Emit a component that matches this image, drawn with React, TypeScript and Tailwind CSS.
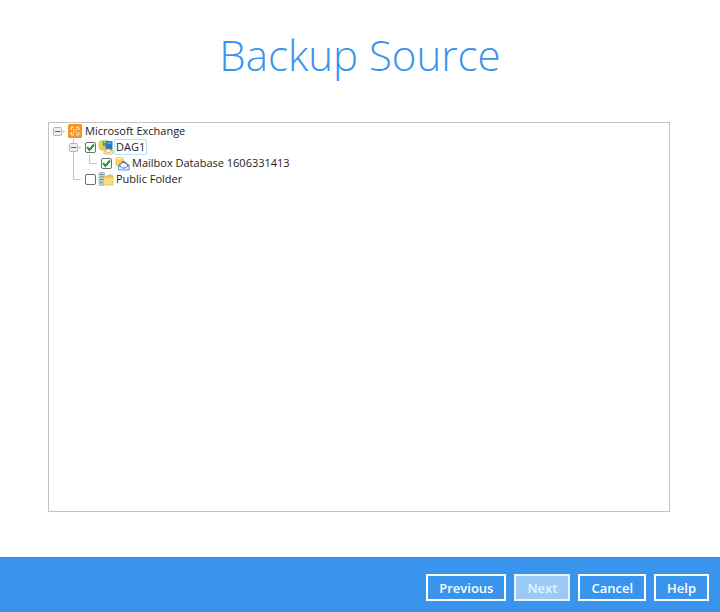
import React, { useState } from "react";
import clsx from "clsx";

/* ---------- Data ---------- */
type Guide = "blank" | "root" | "branch" | "line" | "last";
type IconName = "exchange" | "dag" | "mailbox" | "folder";
type Row = { id: string; label: string; icon: IconName; guides: Guide[]; checkbox: boolean; selected?: boolean };

const ROWS: Row[] = [
  { id: "exchange", label: "Microsoft Exchange", icon: "exchange", guides: ["root"], checkbox: false },
  { id: "dag1", label: "DAG1", icon: "dag", guides: ["blank", "branch"], checkbox: true, selected: true },
  { id: "mailbox", label: "Mailbox Database 1606331413", icon: "mailbox", guides: ["blank", "line", "last"], checkbox: true },
  { id: "public", label: "Public Folder", icon: "folder", guides: ["blank", "last"], checkbox: true },
];

const BUTTONS = [
  { label: "Previous", disabled: false },
  { label: "Next", disabled: true },
  { label: "Cancel", disabled: false },
  { label: "Help", disabled: false },
];

/* ---------- Tree guides ---------- */
const GUIDE_PATHS: Record<Guide, string> = {
  blank: "",
  root: "M12 8.5H16",
  branch: "M8.5 0V4M8.5 13V16M13 8.5H16",
  line: "M8.5 0V16",
  last: "M8.5 0V8.5H16",
};

const GuideCell = ({ kind, label }: { kind: Guide; label: string }) => {
  const expander = kind === "root" || kind === "branch";
  const art = (
    <svg viewBox="0 0 16 16" className="block size-4" fill="none" aria-hidden="true">
      <path d={GUIDE_PATHS[kind]} stroke="#c4c4c4" />
      {expander && (
        <>
          <rect x="4.5" y="4.5" width="8" height="8" rx="1" fill="#efefef" stroke="#b4b4b4" />
          <path d="M6 8.5H11" stroke="#5c5c5c" />
        </>
      )}
    </svg>
  );
  return expander ? (
    <button type="button" aria-label={`Collapse ${label}`} className="shrink-0">{art}</button>
  ) : (
    <span className="shrink-0">{art}</span>
  );
};

/* ---------- Icons ---------- */
const NodeIcon = ({ name }: { name: IconName }) => (
  <svg viewBox="0 0 16 16" className="size-4 shrink-0" fill="none" aria-hidden="true">
    {name === "exchange" && (
      <>
        <rect x="1" y="1" width="14" height="14" rx="1.5" fill="#f7941e" />
        <path d="M7 4.2H5.2Q4.2 4.2 4.2 5.2V7M9 4.2h1.8q1 0 1 1V7M4.2 9v1.8q0 1 1 1H7M11.8 9v1.8q0 1-1 1H9" stroke="#ffe6c2" strokeWidth="1.3" />
        <path d="M6 6 7.3 7.3M10 6 8.7 7.3M6 10 7.3 8.7M10 10 8.7 8.7" stroke="#ffe2b8" strokeWidth="1.2" />
      </>
    )}
    {name === "dag" && (
      <>
        <path d="M1 3Q3.5 1 6 2V10.5Q3 11.5 1 9.5Z" fill="#fbd45c" stroke="#e2ae45" strokeWidth="0.7" />
        <rect x="4.5" y="1.5" width="6" height="8.5" rx="1" fill="#4fae52" />
        <path d="M5.5 3H9" stroke="#b8e4ac" />
        <rect x="8" y="2" width="6.5" height="9" rx="1.2" fill="#2a72c4" />
        <path d="M9.3 4H13.2" stroke="#8cc6f2" />
        <rect x="3" y="7" width="4.5" height="4.5" fill="#f6c441" />
        <path d="M6 12 10.3 9.8 14.8 11.8V15H6Z" fill="#fff3c4" stroke="#c9ac62" strokeWidth="0.8" />
        <path d="m6.3 12.2 4.1 1.7 4.1-1.7" stroke="#d8b866" strokeWidth="0.8" />
      </>
    )}
    {name === "mailbox" && (
      <>
        <path d="M2 3.2Q5.5 0.8 9 3.2V10Q5.5 12.5 2 10Z" fill="#fbd25c" stroke="#edb94b" strokeWidth="0.7" />
        <ellipse cx="5.5" cy="3.5" rx="2.8" ry="1" fill="#fff0b0" />
        <path d="M4.5 10 9.5 5.5 15.2 10V15H4.5Z" fill="#3f76bd" />
        <path d="M8.3 7.2 9.7 6 12 8Z" fill="#d64d3d" />
        <path d="M6.5 9.2 9 7.8 13 9.2V12.5H6.5Z" fill="#f4f8fe" />
        <path d="M4.5 10.5 9.8 13.5 15.2 10.5V15H4.5Z" fill="#dceafa" stroke="#5d8cc8" strokeWidth="0.8" />
      </>
    )}
    {name === "folder" && (
      <>
        <rect x="1" y="1.5" width="5.5" height="13" rx="0.5" fill="#c4d7df" stroke="#8faab5" strokeWidth="0.6" />
        <path d="M2 3.5H5.5M2 6H5.5M2 8.5H5.5" stroke="#5b8796" />
        <path d="M2 11.5H4" stroke="#57a552" strokeWidth="1.3" />
        <path d="M5.5 5H9.5L10.3 4H14L15 5.2V14H5.5Z" fill="#f0c758" stroke="#dcae48" strokeWidth="0.7" />
        <path d="M6 7H14.7V13.6H6Z" fill="#fbdc84" />
      </>
    )}
  </svg>
);

/* ---------- Tree ---------- */
const SourceTree = () => {
  const [checked, setChecked] = useState<Record<string, boolean>>({ dag1: true, mailbox: true });

  return (
    <ul className="text-[11px] leading-4 text-[#222222]">
      {ROWS.map((row) => (
        <li key={row.id} className="flex h-4 items-center">
          {row.guides.map((kind, i) => (
            <GuideCell key={i} kind={kind} label={row.label} />
          ))}
          {row.checkbox && (
            <span className="ml-1 grid shrink-0 place-items-center">
              <input
                id={row.id}
                type="checkbox"
                checked={!!checked[row.id]}
                onChange={(e) => setChecked({ ...checked, [row.id]: e.target.checked })}
                className="peer col-start-1 row-start-1 size-[11px] appearance-none rounded-[2px] border border-[#6e6e6e] bg-white"
              />
              <svg viewBox="0 0 11 11" className="pointer-events-none invisible col-start-1 row-start-1 size-[11px] peer-checked:visible" fill="none" aria-hidden="true">
                <path d="M2 5.2 4.5 8 9 2.5" stroke="#159a35" strokeWidth="2" />
              </svg>
            </span>
          )}
          <label htmlFor={row.checkbox ? row.id : undefined} className="ml-0.5 flex items-center">
            <NodeIcon name={row.icon} />
            <span className={clsx("h-4 rounded-[2px] border px-px leading-[14px]", row.selected ? "border-[#b5e2fa]" : "border-transparent")}>
              {row.label}
            </span>
          </label>
        </li>
      ))}
    </ul>
  );
};

/* ---------- Page ---------- */
const App = () => (
  <div className="flex min-h-screen flex-col bg-white font-['Open_Sans','Noto_Sans',sans-serif]">
    <main className="flex grow flex-col px-12 pt-6 pb-[45px]">
      <h1 className="text-center text-[42px] leading-[62px] font-light text-[#3994ee]">Backup Source</h1>
      <section aria-label="Backup sources" className="mt-9 mr-0.5 grow border border-[#c3c3c3]">
        <SourceTree />
      </section>
    </main>
    <footer className="flex justify-end gap-2 border-t border-[#2f86de] bg-[#3994ee] px-[11px] pt-4 pb-[11px]">
      {BUTTONS.map(({ label, disabled }) => (
        <button
          key={label}
          type="button"
          disabled={disabled}
          className={clsx(
            "h-[27px] border-2 px-[11px] text-[13px] leading-5 font-semibold",
            disabled ? "border-[#eaf4fe] bg-[#9ccaf7] text-[#e6f3fe]" : "border-white text-white"
          )}
        >
          {label}
        </button>
      ))}
    </footer>
  </div>
);

export default App;
